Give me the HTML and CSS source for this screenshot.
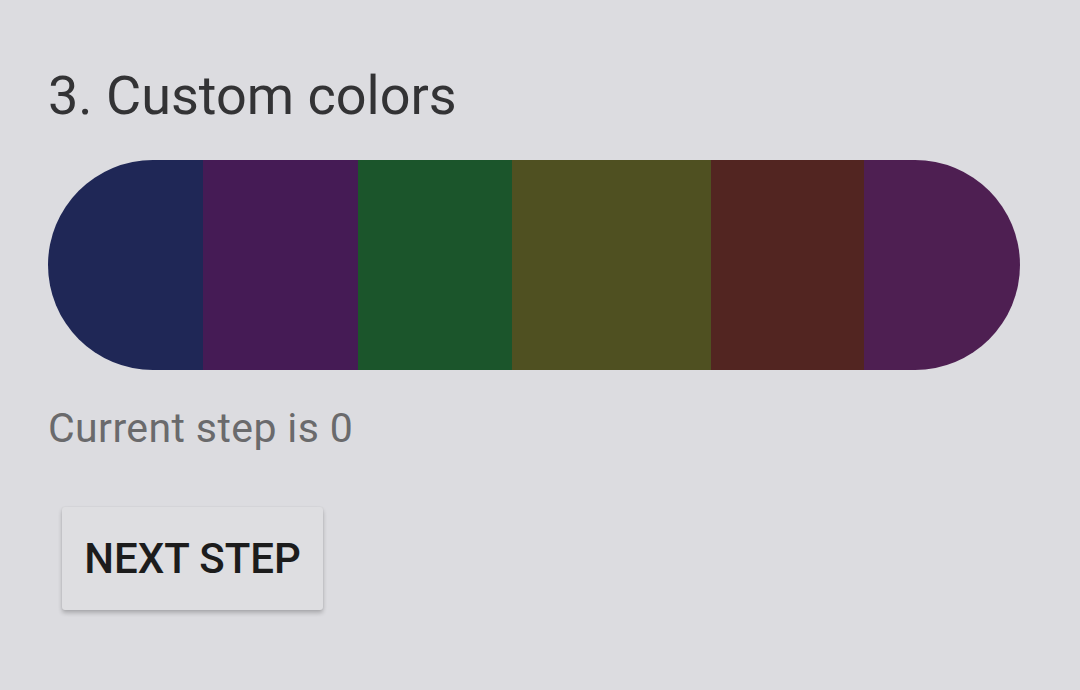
FILE: index.html
```html
<!DOCTYPE html>
<html>
<head>
<meta charset="utf-8">
<link rel="stylesheet" href="styles.css">
</head>
<body>
<main class="page">
  <h1 class="title">3. Custom colors</h1>
  <div class="bar">
    <div class="seg seg-navy" style="width:155px"></div>
    <div class="seg seg-purple" style="width:155px"></div>
    <div class="seg seg-green" style="width:154px"></div>
    <div class="seg seg-olive" style="width:199px"></div>
    <div class="seg seg-brown" style="width:153px"></div>
    <div class="seg seg-violet" style="width:156px"></div>
  </div>
  <p class="status">Current step is 0</p>
  <button class="btn">NEXT STEP</button>
</main>
</body>
</html>
```

FILE: styles.css
```css
html, body {
  margin: 0;
  padding: 0;
  background: #dcdce0;
  width: 1080px;
  height: 690px;
  overflow: hidden;
}
.page {
  padding: 60px 0 0 48px;
  font-family: Roboto, "Liberation Sans", sans-serif;
  display: flex;
  flex-direction: column;
  align-items: flex-start;
}
.title {
  margin: 0;
  font-size: 54px;
  font-weight: 400;
  color: #333335;
  line-height: 72px;
}
.bar {
  margin-top: 28px;
  display: flex;
  height: 210px;
  width: 972px;
  border-radius: 105px;
  overflow: hidden;
}
.seg { height: 100%; flex: none; }
.seg-navy { background: #1f2756; }
.seg-purple { background: #451b55; }
.seg-green { background: #1b552b; }
.seg-olive { background: #4f5021; }
.seg-brown { background: #522521; }
.seg-violet { background: #4e1f52; }
.status {
  margin: 32px 0 0 0;
  font-size: 41px;
  letter-spacing: 0.4px;
  line-height: 52px;
  color: #6a6a6c;
}
.btn {
  margin: 53px 0 0 14px;
  width: 261px;
  height: 103px;
  border: none;
  border-radius: 3px;
  background: #dedee1;
  box-shadow: 0 3px 4px rgba(0,0,0,0.22), 0 0 2px rgba(0,0,0,0.08);
  font-family: Roboto, "Liberation Sans", sans-serif;
  font-weight: 500;
  font-size: 42px;
  color: #1c1c1c;
  padding: 0;
}
```
